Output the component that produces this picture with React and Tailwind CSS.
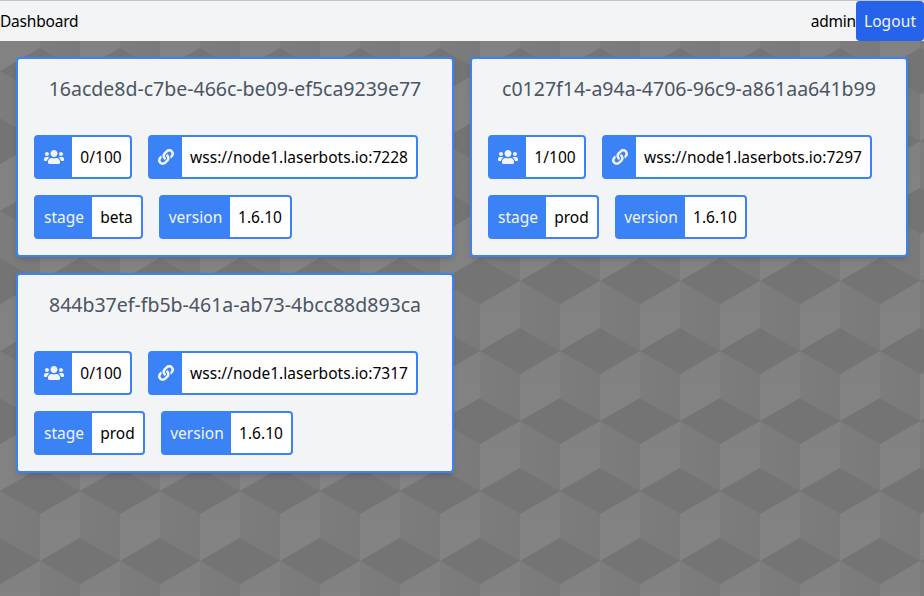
import { FaUsers, FaLink } from "react-icons/fa";

const servers = [
  {
    id: "16acde8d-c7be-466c-be09-ef5ca9239e77",
    players: "0/100",
    url: "wss://node1.laserbots.io:7228",
    stage: "beta",
    stageWidth: "w-[109px]",
    version: "1.6.10",
    versionWidth: "w-[133px]",
    versionLabel: "w-[69px]",
  },
  {
    id: "c0127f14-a94a-4706-96c9-a861aa641b99",
    players: "1/100",
    url: "wss://node1.laserbots.io:7297",
    stage: "prod",
    stageWidth: "w-[111px]",
    version: "1.6.10",
    versionWidth: "w-[132px]",
    versionLabel: "w-[68px]",
  },
  {
    id: "844b37ef-fb5b-461a-ab73-4bcc88d893ca",
    players: "0/100",
    url: "wss://node1.laserbots.io:7317",
    stage: "prod",
    stageWidth: "w-[111px]",
    version: "1.6.10",
    versionWidth: "w-[132px]",
    versionLabel: "w-[68px]",
  },
];

function CubeBackground() {
  return (
    <svg className="absolute inset-0 h-full w-full" aria-hidden="true">
      <defs>
        <linearGradient id="light" x1="0" y1="0" x2="0" y2="1">
          <stop offset="0" stopColor="#818181" />
          <stop offset="1" stopColor="#838383" />
        </linearGradient>
        <linearGradient id="mid" x1="0" y1="0" x2="1" y2="0.2">
          <stop offset="0" stopColor="#7d7d7d" />
          <stop offset="1" stopColor="#7a7a7a" />
        </linearGradient>
        <pattern id="cubes" width="80" height="140" patternUnits="userSpaceOnUse" y="1">
          <rect width="80" height="140" fill="#7c7c7c" />
          <path d="M40 93 80 70V117L40 140Z" fill="url(#light)" />
          <path d="M0 70 40 93V140L0 117Z" fill="url(#mid)" />
          <path d="M0 23 40 0V47L0 70Z" fill="url(#light)" />
          <path d="M40 0 80 23V70L40 47Z" fill="url(#mid)" />
          <path d="M0 70 40 47 80 70 40 93Z" fill="#747474" />
          <path d="M0 0H40L0 23ZM80 0H40L80 23ZM0 140H40L0 117ZM80 140H40L80 117Z" fill="#747474" />
        </pattern>
      </defs>
      <rect width="100%" height="100%" fill="url(#cubes)" />
    </svg>
  );
}

function Chip({ label, labelWidth, width, children }) {
  return (
    <div className={`flex h-11 shrink-0 overflow-hidden rounded border-2 border-[#3b82f6] bg-[#3b82f6] ${width}`}>
      <div className={`flex shrink-0 items-center justify-center text-[#f3f4f6] ${labelWidth}`}>{label}</div>
      <div className="flex flex-1 items-center justify-center whitespace-nowrap bg-white text-black">{children}</div>
    </div>
  );
}

function ServerCard({ server }) {
  return (
    <div className="flex h-[200px] flex-col rounded border-2 border-[#3b82f6] bg-[#f3f4f6] p-4 shadow-md">
      <h2 className="mb-8 whitespace-nowrap text-center text-[19.5px] leading-7 tracking-normal text-[#4b5563]">
        {server.id}
      </h2>
      <div className="flex flex-wrap gap-4 tracking-[0.02px]">
        <Chip label={<FaUsers className="h-4 w-5" />} labelWidth="w-9" width="w-[98px]">
          {server.players}
        </Chip>
        <Chip label={<FaLink className="h-4 w-4" />} labelWidth="w-8" width="w-[270px]">
          {server.url}
        </Chip>
        <Chip label="stage" labelWidth="w-14" width={server.stageWidth}>
          {server.stage}
        </Chip>
        <Chip label="version" labelWidth={server.versionLabel} width={server.versionWidth}>
          {server.version}
        </Chip>
      </div>
    </div>
  );
}

export default function App() {
  return (
    <div className="relative h-[596px] w-full overflow-hidden font-['Noto_Sans',sans-serif] text-[15.5px] leading-6 tracking-[-0.2px]">
      <CubeBackground />
      <div className="relative">
        <header className="flex h-[41px] items-center justify-between border-t border-[#c4c4c4] bg-[#f3f4f6] text-black">
          <span>Dashboard</span>
          <div className="flex items-center">
            <span>admin</span>
            <button className="h-10 w-[68px] rounded bg-[#2563eb] tracking-[0.1px] text-[#f3f4f6]">Logout</button>
          </div>
        </header>
        <main className="grid grid-cols-2 gap-4 p-4">
          {servers.map((server) => (
            <ServerCard key={server.id} server={server} />
          ))}
        </main>
      </div>
    </div>
  );
}
